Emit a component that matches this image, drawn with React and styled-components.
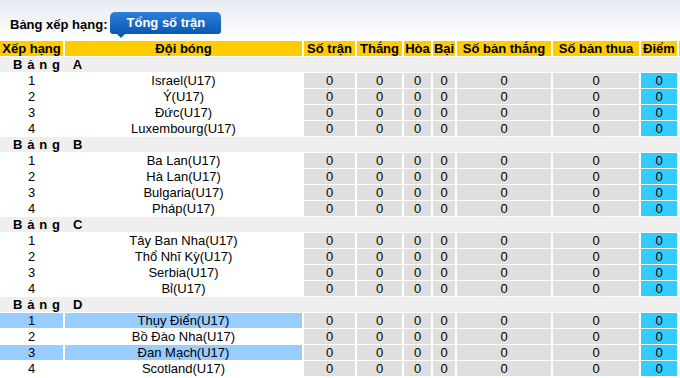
import React from 'react';
import styled, { createGlobalStyle } from 'styled-components';

const GlobalStyle = createGlobalStyle`
  html, body {
    margin: 0;
    padding: 0;
    background: #fff;
    overflow: hidden;
  }
  body {
    font-family: "Liberation Sans", Arial, sans-serif;
    font-size: 13px;
    color: #000;
  }
`;

const Page = styled.div`
  width: 680px;
  height: 378px;
  overflow: hidden;
`;

const TopBar = styled.div`
  display: flex;
  align-items: center;
  height: 41px;
  box-sizing: border-box;
  padding: 4px 0 0 10px;
  background: linear-gradient(#e7ebf1 0%, #f3f5f8 50%, #ffffff 100%);
`;

const Label = styled.span`
  font-weight: bold;
  font-size: 13px;
  padding-top: 3px;
  margin-right: 2px;
`;

const Tab = styled.div`
  position: relative;
  height: 22px;
  line-height: 22px;
  padding: 0 16px 0 17px;
  width: 111px;
  box-sizing: border-box;
  border-radius: 5px 5px 3px 3px;
  background: linear-gradient(#2a80dc, #0d57b4);
  color: #fff;
  font-weight: bold;
  font-size: 13px;
  white-space: nowrap;

  &::after {
    content: '';
    position: absolute;
    left: 7px;
    bottom: -4px;
    border-left: 4px solid transparent;
    border-right: 4px solid transparent;
    border-top: 4px solid #0d57b4;
  }
`;

const Table = styled.table`
  table-layout: fixed;
  border-collapse: separate;
  border-spacing: 2px 1px;
  margin-left: -2px;
  margin-top: -1px;
  width: 693px;
`;

const Th = styled.th`
  background: #ffcc00;
  height: 15px;
  line-height: 15px;
  padding: 0;
  font-size: 13px;
  font-weight: bold;
  text-align: center;
  white-space: nowrap;
  overflow: hidden;
`;

const GroupCell = styled.td`
  background: #efefef;
  height: 15px;
  line-height: 15px;
  padding: 0 0 0 13px;
  font-weight: bold;
  letter-spacing: 4.8px;
  white-space: pre;
`;

const Td = styled.td`
  height: 15px;
  line-height: 15px;
  padding: 0;
  text-align: center;
  white-space: nowrap;
  overflow: hidden;
  background: ${(p) =>
    p.$kind === 'num' ? '#dfdfdf' : p.$kind === 'pts' ? '#33ccff' : p.$hl ? '#99ccff' : 'transparent'};
`;

const widths = [63, 237, 51, 45, 27, 22, 94, 86, 36, 10];
const headers = ['Xếp hạng', 'Đội bóng', 'Số trận', 'Thắng', 'Hòa', 'Bại', 'Số bản thắng', 'Số bản thua', 'Điểm', ''];

const groups = [
  { name: 'A', teams: ['Israel(U17)', 'Ý(U17)', 'Đức(U17)', 'Luxembourg(U17)'] },
  { name: 'B', teams: ['Ba Lan(U17)', 'Hà Lan(U17)', 'Bulgaria(U17)', 'Pháp(U17)'] },
  { name: 'C', teams: ['Tây Ban Nha(U17)', 'Thổ Nhĩ Kỳ(U17)', 'Serbia(U17)', 'Bỉ(U17)'] },
  { name: 'D', teams: ['Thụy Điển(U17)', 'Bồ Đào Nha(U17)', 'Đan Mạch(U17)', 'Scotland(U17)'], highlight: [0, 2] },
];

const App = () => (
  <Page>
    <GlobalStyle />
    <TopBar>
      <Label>Bảng xếp hạng:</Label>
      <Tab>Tổng số trận</Tab>
    </TopBar>
    <Table>
      <colgroup>
        {widths.map((w, i) => (
          <col key={i} style={{ width: w }} />
        ))}
      </colgroup>
      <thead>
        <tr>
          {headers.map((h, i) => (
            <Th key={i}>{h}</Th>
          ))}
        </tr>
      </thead>
      <tbody>
        {groups.map((g) => (
          <React.Fragment key={g.name}>
            <tr>
              <GroupCell colSpan={10}>{`Bảng ${g.name}`}</GroupCell>
            </tr>
            {g.teams.map((team, i) => {
              const hl = g.highlight && g.highlight.includes(i);
              return (
                <tr key={team}>
                  <Td $hl={hl}>{i + 1}</Td>
                  <Td $hl={hl}>{team}</Td>
                  <Td $kind="num">0</Td>
                  <Td $kind="num">0</Td>
                  <Td $kind="num">0</Td>
                  <Td $kind="num">0</Td>
                  <Td $kind="num">0</Td>
                  <Td $kind="num">0</Td>
                  <Td $kind="pts">0</Td>
                  <Td />
                </tr>
              );
            })}
          </React.Fragment>
        ))}
      </tbody>
    </Table>
  </Page>
);

export default App;
